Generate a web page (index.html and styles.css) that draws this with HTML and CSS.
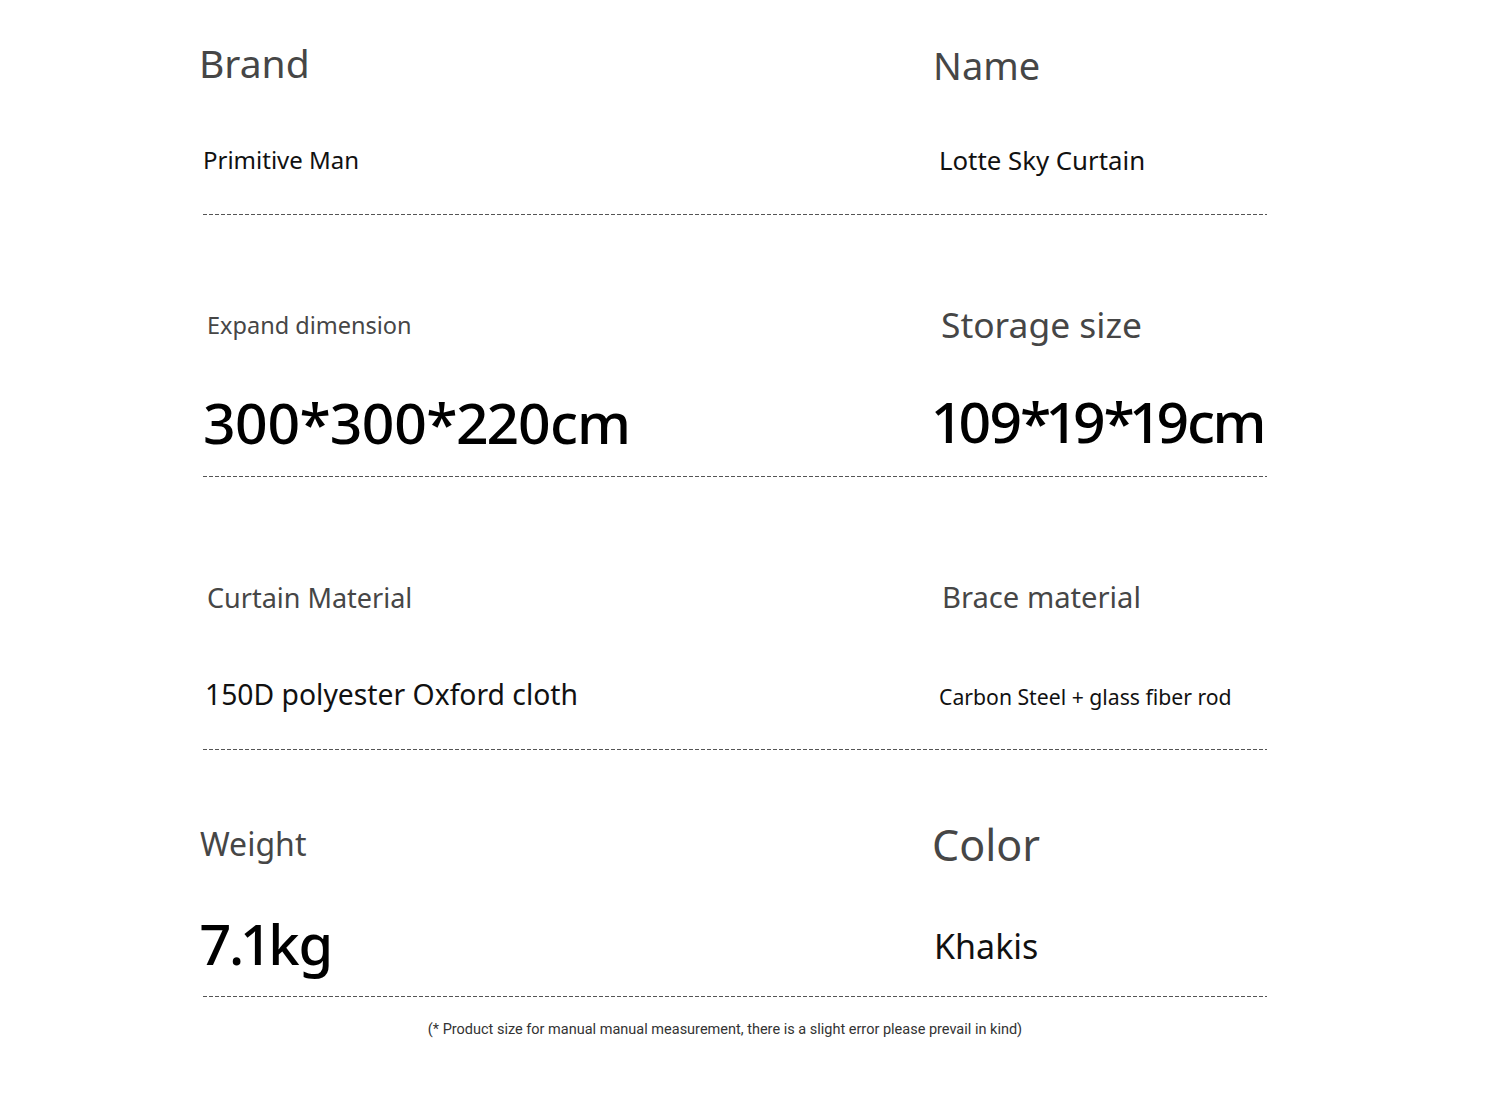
FILE: index.html
```html
<!DOCTYPE html>
<html lang="en">
<head>
    <meta charset="UTF-8">
    <meta name="viewport" content="width=device-width, initial-scale=1.0">
    <title>Product Parameters</title>
    <link rel="stylesheet" href="styles.css">
</head>
<body>

    <div class="specs">
        <!-- Row 1 -->
        <div class="row row-1">
            <div class="cell">
                <div class="label brand">Brand</div>
                <div class="value brand-value">Primitive Man</div>
            </div>
            <div class="cell">
                <div class="label name">Name</div>
                <div class="value name-value">Lotte Sky Curtain</div>
            </div>
        </div>

        <!-- Row 2 -->
        <div class="row row-2">
            <div class="cell">
                <div class="label expand">Expand dimension</div>
                <div class="value big expand-value">300*300*220cm</div>
            </div>
            <div class="cell">
                <div class="label storage">Storage size</div>
                <div class="value big storage-value">109*19*19cm</div>
            </div>
        </div>

        <!-- Row 3 -->
        <div class="row row-3">
            <div class="cell">
                <div class="label curtain">Curtain Material</div>
                <div class="value curtain-value">150D polyester Oxford cloth</div>
            </div>
            <div class="cell">
                <div class="label brace">Brace material</div>
                <div class="value brace-value">Carbon Steel + glass fiber rod</div>
            </div>
        </div>

        <!-- Row 4 -->
        <div class="row row-4">
            <div class="cell">
                <div class="label weight">Weight</div>
                <div class="value big weight-value">7.1kg</div>
            </div>
            <div class="cell">
                <div class="label color">Color</div>
                <div class="value color-value">Khakis</div>
            </div>
        </div>

        <p class="note">(* Product size for manual manual measurement, there is a slight error please prevail in kind)</p>
    </div>

</body>
</html>
```

FILE: styles.css
```css
body {
    margin: 0;
    padding: 0;
    background-color: #fff;
    font-family: "Noto Sans", "Open Sans", sans-serif;
}

.specs {
    width: 1064px;
    margin-left: 203px;
}

.row {
    display: grid;
    grid-template-columns: 731px 1fr;
    background: repeating-linear-gradient(to right, #555 0 4px, transparent 4px 6px) left bottom / 100% 1px no-repeat;
}
.row-1 { height: 215px; }
.row-2 { height: 262px; }
.row-3 { height: 273px; }
.row-4 { height: 247px; }

.cell {
    display: flex;
    flex-direction: column;
    align-items: flex-start;
}

.label,
.value {
    line-height: 1;
    white-space: nowrap;
}
.label {
    color: #464646;
}
.value {
    color: #111;
}
.big {
    font-weight: 500;
    font-variant-numeric: proportional-nums;
    letter-spacing: -1px;
    color: #000;
}

/* row 1 */
.brand { font-size: 39px; margin-top: 43px; margin-left: -4px; }
.brand-value { font-size: 24px; margin-top: 66px; }
.name { font-size: 38px; margin-top: 46px; margin-left: -1px; }
.name-value { font-size: 25.8px; margin-top: 64px; margin-left: 5px; }

/* row 2 */
.expand { font-size: 23.5px; margin-top: 99px; margin-left: 4px; }
.expand-value { font-size: 57px; letter-spacing: -1.1px; margin-top: 56px; }
.storage { font-size: 35.4px; margin-top: 92px; margin-left: 7px; }
.storage-value { font-size: 57px; letter-spacing: -2.4px; margin-top: 51px; }

/* row 3 */
.curtain { font-size: 27px; margin-top: 107px; margin-left: 4px; }
.curtain-value { font-size: 28.3px; margin-top: 68.8px; margin-left: 2px; }
.brace { font-size: 29.2px; margin-top: 106px; margin-left: 8px; }
.brace-value { font-size: 21.2px; margin-top: 74.2px; margin-left: 5px; }

/* row 4 */
.weight { font-size: 32px; margin-top: 78px; margin-left: -3px; }
.weight-value { font-size: 56px; margin-top: 55px; margin-left: -2px; }
.color { font-size: 43px; margin-top: 73px; margin-left: -2px; }
.color-value { font-size: 34px; margin-top: 63px; }

.note {
    margin: 24px 20px 0 0;
    text-align: center;
    font-family: Roboto, "Noto Sans", sans-serif;
    font-size: 14.5px;
    color: #333;
}
```
